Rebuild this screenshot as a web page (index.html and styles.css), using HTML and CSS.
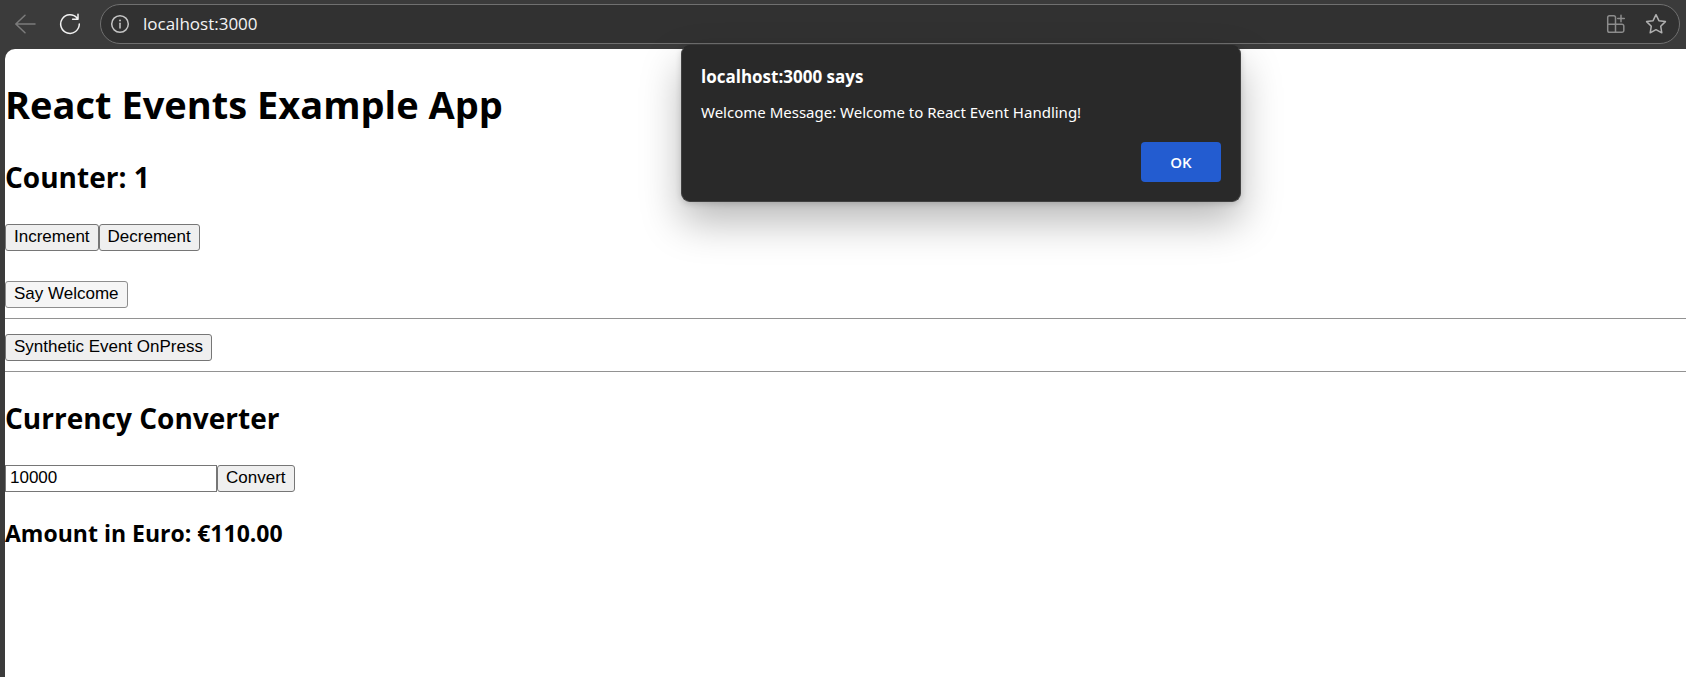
FILE: index.html
```html
<!DOCTYPE html>
<html lang="en">
<head>
<meta charset="utf-8">
<title>React Events Example App</title>
<link rel="stylesheet" href="styles.css">
</head>
<body>
<div class="browser">
  <header class="toolbar">
    <button class="tool tool-back" type="button" aria-label="Back" disabled>
      <svg width="22" height="22" viewBox="0 0 22 22"><path d="M21 11H2M11 2.2L1.8 11L11 19.8"/></svg>
    </button>
    <button class="tool tool-reload" type="button" aria-label="Reload">
      <svg width="22" height="22" viewBox="0 0 22 22"><path d="M20.3 11A9.3 9.3 0 1 1 18.2 5.2M19 1.2V6.2H13.6"/></svg>
    </button>
    <div class="address">
      <button class="tool tool-info" type="button" aria-label="Site information">
        <svg width="20" height="20" viewBox="0 0 20 20"><circle cx="10" cy="10" r="8.3"/><path d="M10 9.2V14"/><circle class="dot" cx="10" cy="6.6" r="1"/></svg>
      </button>
      <input class="url" type="text" value="localhost:3000" aria-label="Address">
      <button class="tool tool-dim" type="button" aria-label="Install app">
        <svg width="20" height="20" viewBox="0 0 20 20"><path d="M9.500 10.200V3.500A1.800 1.800 0 0 0 7.700 1.700H3.500A1.800 1.800 0 0 0 1.700 3.500V16.500A1.800 1.800 0 0 0 3.500 18.300H16A1.800 1.800 0 0 0 17.800 16.500V12A1.800 1.800 0 0 0 16 10.200H1.700M9.500 10.200V18.300M15 1.200V7.800M11.700 4.500H18.300"/></svg>
      </button>
      <button class="tool tool-star" type="button" aria-label="Add to favorites">
        <svg width="22" height="22" viewBox="0 0 22 22"><path d="M11 1.700L13.900 7.700L20.400 8.600L15.700 13.200L16.800 19.800L11 16.700L5.200 19.800L6.300 13.200L1.600 8.600L8.100 7.700Z"/></svg>
      </button>
    </div>
  </header>
  <main class="page">
    <h1 class="title">React Events Example App</h1>
    <h2 class="heading">Counter: 1</h2>
    <div class="row">
      <button class="btn" type="button">Increment</button>
      <button class="btn" type="button">Decrement</button>
    </div>
    <div class="row row-welcome">
      <button class="btn btn-active" type="button">Say Welcome</button>
    </div>
    <hr class="rule">
    <div class="row row-press">
      <button class="btn" type="button">Synthetic Event OnPress</button>
    </div>
    <hr class="rule">
    <h2 class="heading">Currency Converter</h2>
    <form class="row">
      <input class="amount" type="text" value="10000" aria-label="Amount">
      <button class="btn" type="button">Convert</button>
    </form>
    <h3 class="result">Amount in Euro: €110.00</h3>
  </main>
  <div class="dialog" role="alertdialog" aria-labelledby="dialog-title" aria-describedby="dialog-text">
    <h2 class="dialog-title" id="dialog-title">localhost:3000 says</h2>
    <p class="dialog-text" id="dialog-text">Welcome Message: Welcome to React Event Handling!</p>
    <div class="dialog-actions">
      <button class="ok" type="button">OK</button>
    </div>
  </div>
</div>
</body>
</html>
```
FILE: styles.css
```css
* {
  box-sizing: border-box;
}

body {
  margin: 0;
  background: #3b3b3b;
  font-family: "Segoe UI", "Open Sans", "Noto Sans", sans-serif;
}

.browser {
  position: relative;
  display: flex;
  flex-direction: column;
  min-height: 100vh;
}

.toolbar {
  display: flex;
  align-items: center;
  padding: 4px 6px 5px 14px;
}

.tool {
  display: flex;
  padding: 0;
  border: 0;
  background: none;
  color: #f2f2f2;
}

.tool svg {
  fill: none;
  stroke: currentColor;
  stroke-width: 1.5;
  stroke-linejoin: round;
  stroke-linecap: round;
}

.tool .dot {
  fill: currentColor;
  stroke: none;
}

.tool-back {
  margin-right: 23px;
  color: #7c7c7c;
}

.tool-reload {
  margin-right: 19px;
}

.tool-info {
  color: #c4c4c4;
}

.tool-dim {
  margin-right: 19px;
  color: #8c8c8c;
}

.tool-star {
  color: #b0b0b0;
}

.address {
  display: flex;
  flex: 1;
  align-items: center;
  height: 40px;
  padding: 0 12px 0 9px;
  border: 1px solid #707070;
  border-radius: 20px;
  background: #313131;
}

.url {
  flex: 1;
  min-width: 0;
  padding: 0 0 0 13px;
  border: 0;
  outline: 0;
  background: none;
  color: #f4f4f4;
  font: 17px/24px "Segoe UI", "Open Sans", "Noto Sans", sans-serif;
}

.page {
  flex: 1;
  margin-left: 5px;
  padding-top: 28px;
  border-top-left-radius: 10px;
  background: #fff;
  color: #000;
}

.title {
  margin: 0 0 26px;
  font-size: 38px;
  line-height: 54px;
}

.heading {
  margin: 26px 0 27px;
  font-size: 28px;
  line-height: 40px;
}

.row {
  display: flex;
}

.row-welcome {
  margin-top: 30px;
}

.row-press {
  margin-top: 15px;
}

.btn {
  height: 27px;
  padding: 0 8px 1px;
  border: 1px solid #767676;
  border-radius: 3px;
  background: #efefef;
  color: #000;
  font: 17px/24px Arial, "Liberation Sans", sans-serif;
}

.btn-active {
  border-color: #8d8d8d;
  background: #f5f5f5;
}

.rule {
  height: 1px;
  margin: 10px 0 0;
  border: 0;
  background: #929292;
}

.amount {
  width: 212px;
  height: 27px;
  padding: 0 4px 1px;
  border: 1px solid #767676;
  background: #fff;
  color: #000;
  font: 17px/24px Arial, "Liberation Sans", sans-serif;
}

.result {
  margin: 25px 0;
  font-size: 23px;
  line-height: 32px;
}

.dialog {
  position: absolute;
  top: 45px;
  left: 50%;
  width: 560px;
  margin-left: -162px;
  padding: 19px;
  border: 1px solid #404040;
  border-top-color: #292929;
  border-radius: 9px;
  background: #292929;
  box-shadow: 0 20px 40px rgba(0, 0, 0, 0.28), 0 2px 6px rgba(0, 0, 0, 0.15);
  color: #fff;
}

.dialog-title {
  margin: 0;
  font-size: 17px;
  line-height: 24px;
}

.dialog-text {
  margin: 11px 0 18px;
  font-family: "Segoe UI", "Noto Sans", sans-serif;
  font-size: 15px;
  line-height: 24px;
}

.dialog-actions {
  display: flex;
  justify-content: flex-end;
}

.ok {
  width: 80px;
  height: 40px;
  padding: 0 0 1px;
  border: 0;
  border-radius: 4px;
  background: #235cd0;
  color: #fff;
  font: 600 15px/20px "Segoe UI", "Open Sans", "Noto Sans", sans-serif;
}
```
